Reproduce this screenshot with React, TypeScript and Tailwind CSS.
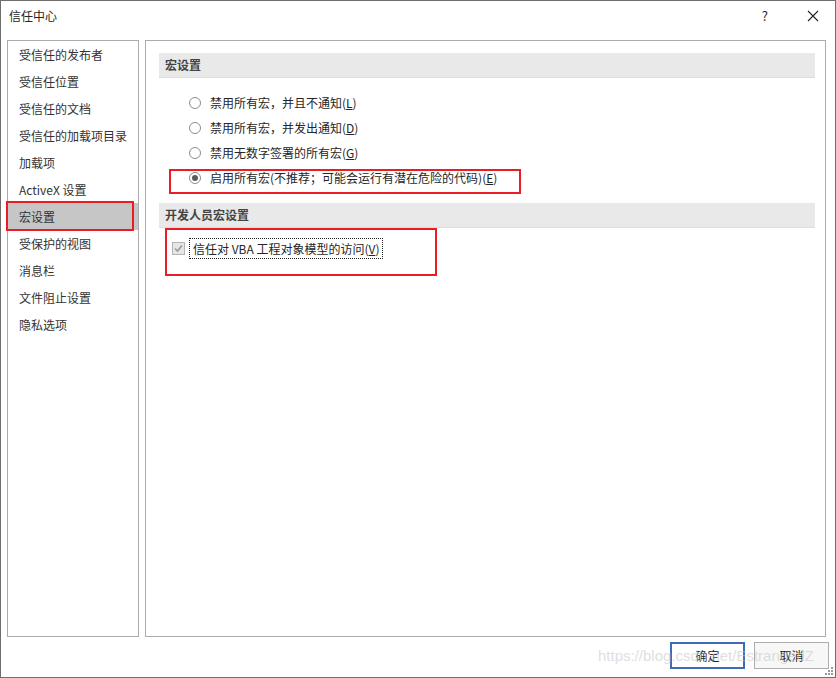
import React from "react";

const navItems = [
  "受信任的发布者",
  "受信任位置",
  "受信任的文档",
  "受信任的加载项目录",
  "加载项",
  "ActiveX 设置",
  "宏设置",
  "受保护的视图",
  "消息栏",
  "文件阻止设置",
  "隐私选项",
];

const radios = [
  { label: "禁用所有宏，并且不通知", key: "L" },
  { label: "禁用所有宏，并发出通知", key: "D" },
  { label: "禁用无数字签署的所有宏", key: "G" },
  { label: "启用所有宏(不推荐；可能会运行有潜在危险的代码)", key: "E" },
];

function Radio({ checked }: { checked: boolean }) {
  return (
    <span className="flex h-[12px] w-[12px] items-center justify-center rounded-full border border-[#8c8c8c] bg-white">
      {checked ? <span className="h-[6px] w-[6px] rounded-full bg-[#5a5a5a]" /> : null}
    </span>
  );
}

function SectionHeader({ title }: { title: string }) {
  return (
    <div className="flex h-[25px] items-center border-b border-[#dcdcdc] bg-[#e9e9e9] pb-[1px] pl-[6px] text-[12px] font-bold text-[#444]">
      {title}
    </div>
  );
}

export default function App() {
  const selected = "宏设置";

  return (
    <div
      className="relative flex h-[678px] w-[836px] flex-col border border-[#6e6e6e] bg-white text-[12px] text-[#262626]"
      style={{ fontFamily: '"Noto Sans CJK SC", "Noto Sans", sans-serif' }}
    >
      {/* title bar */}
      <div className="flex h-[39px] items-start pt-[5px]">
        <span className="ml-[8px] leading-[20px]">信任中心</span>
        <span className="ml-auto mr-[39px] text-[13px] leading-[20px]">?</span>
        <span className="mr-[16px] flex h-[20px] items-center">
          <svg width="12" height="12" viewBox="0 0 12 12">
            <path d="M1 1 L11 11 M11 1 L1 11" stroke="#222" strokeWidth="1.1" />
          </svg>
        </span>
      </div>

      {/* body */}
      <div className="flex h-[597px] gap-[6px] pl-[6px]">
        <div className="w-[132px] border border-[#ababab]">
          {navItems.map((item) => (
            <div
              key={item}
              className={`relative flex h-[27px] items-center pl-[11px] text-[#333] ${
                item === selected ? "bg-[#c6c6c6]" : ""
              }`}
            >
              {item}
              {item === selected ? (
                <span className="pointer-events-none absolute left-[-2px] top-[-2px] h-[30px] w-[128px] border-2 border-[#ea1c24]" />
              ) : null}
            </div>
          ))}
        </div>

        <div className="w-[681px] border border-[#ababab] pl-[13px] pr-[10px] pt-[12px]">
          <SectionHeader title="宏设置" />
          <div className="mt-[12px] flex flex-col">
            {radios.map((r, i) => (
              <div key={r.key} className="relative flex h-[25px] items-center pl-[30px]">
                <Radio checked={i === 3} />
                <span className="ml-[9px]">
                  {r.label}(<span className="underline">{r.key}</span>)
                </span>
                {i === 3 ? (
                  <span className="pointer-events-none absolute left-[10px] top-[4px] h-[25px] w-[352px] border-2 border-[#ea1c24]" />
                ) : null}
              </div>
            ))}
          </div>

          <div className="mt-[13px]">
            <SectionHeader title="开发人员宏设置" />
          </div>
          <div className="relative flex h-[47px] items-start pl-[13px] pt-[10px]">
            <span className="mt-[4px] flex h-[13px] w-[13px] items-center justify-center border border-[#b4b4b4] bg-[#e6e6e6]">
              <svg width="9" height="9" viewBox="0 0 9 9">
                <path d="M1 4.5 L3.5 7 L8 1.5" stroke="#9a9a9a" strokeWidth="1.6" fill="none" />
              </svg>
            </span>
            <span className="ml-[4px] flex h-[21px] items-center border border-dotted border-[#222] px-[3px]">
              信任对 VBA 工程对象模型的访问(<span className="underline">V</span>)
            </span>
            <span className="pointer-events-none absolute left-[6px] top-[0px] h-[48px] w-[272px] border-2 border-[#ea1c24]" />
          </div>
        </div>
      </div>

      {/* buttons */}
      <div className="mt-[5px] flex gap-[9px] pl-[669px]">
        <button className="h-[27px] w-[75px] border-2 border-[#3b6cb4] bg-white text-[12px] text-[#222]">
          确定
        </button>
        <button className="h-[27px] w-[75px] border border-[#adadad] bg-[#f7f7f7] text-[12px] text-[#222]">
          取消
        </button>
      </div>

      {/* watermark */}
      <span
        className="pointer-events-none absolute left-[597px] top-[644px] text-[15px] text-[#c8c8c8]/60"
        style={{ fontFamily: '"Liberation Sans", sans-serif' }}
      >
        https://blog.csdn.net/EstrangedZ
      </span>

      {/* resize grip */}
      <svg className="absolute bottom-[1px] right-[1px]" width="9" height="9" viewBox="0 0 9 9">
        <rect x="6" y="0" width="2" height="2" fill="#9a9a9a" />
        <rect x="3" y="3" width="2" height="2" fill="#9a9a9a" />
        <rect x="6" y="3" width="2" height="2" fill="#9a9a9a" />
        <rect x="0" y="6" width="2" height="2" fill="#9a9a9a" />
        <rect x="3" y="6" width="2" height="2" fill="#9a9a9a" />
        <rect x="6" y="6" width="2" height="2" fill="#9a9a9a" />
      </svg>
    </div>
  );
}
